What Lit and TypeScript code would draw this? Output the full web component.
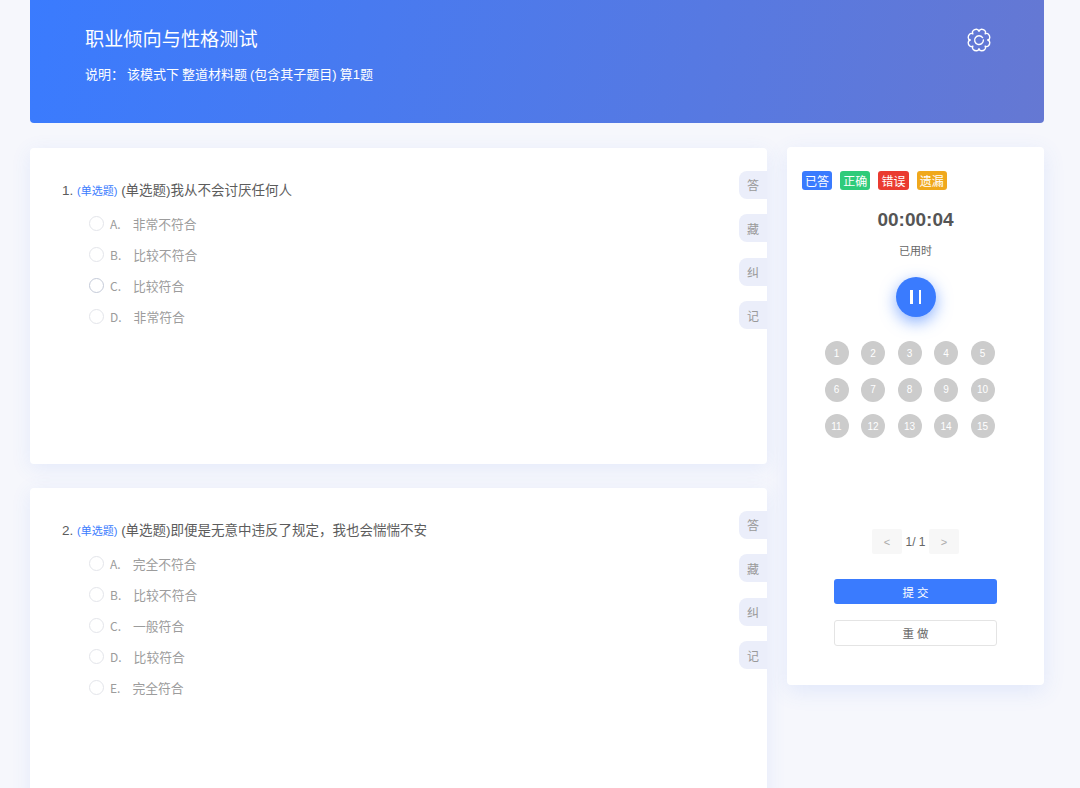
import { LitElement, html, css } from "lit";
import { customElement } from "lit/decorators.js";

const questions = [
  {
    no: 1,
    title: "(单选题)我从不会讨厌任何人",
    options: ["非常不符合", "比较不符合", "比较符合", "非常符合"],
  },
  {
    no: 2,
    title: "(单选题)即便是无意中违反了规定，我也会惴惴不安",
    options: ["完全不符合", "比较不符合", "一般符合", "比较符合", "完全符合"],
  },
];

const letters = ["A", "B", "C", "D", "E"];
const tools = ["答", "藏", "纠", "记"];
const legend = [
  { label: "已答", cls: "blue" },
  { label: "正确", cls: "green" },
  { label: "错误", cls: "red" },
  { label: "遗漏", cls: "amber" },
];

// eight rounded teeth, centred on 12,12
function gearPath() {
  const pt = (r: number, deg: number) => {
    const a = (deg * Math.PI) / 180;
    return `${(12 + r * Math.cos(a)).toFixed(2)} ${(12 + r * Math.sin(a)).toFixed(2)}`;
  };
  let d = `M${pt(8.7, 0)}`;
  for (let k = 0; k < 8; k++) {
    const a = 22.5 + k * 45;
    d += ` Q${pt(10.9, a - 19)} ${pt(11.1, a - 9)}`;
    d += ` Q${pt(11.7, a)} ${pt(11.1, a + 9)}`;
    d += ` Q${pt(10.9, a + 19)} ${pt(8.7, a + 22.5)}`;
  }
  return d + "Z";
}

@customElement("app-root")
export class AppRoot extends LitElement {
  static styles = css`
    :host {
      display: block;
      height: 788px;
      overflow: hidden;
      box-sizing: border-box;
      padding: 0 36px 0 30px;
      background: #f6f7fc;
      color: #555;
      font-family: "Liberation Sans", "Noto Sans CJK SC", sans-serif;
    }

    .banner {
      height: 123px;
      box-sizing: border-box;
      padding: 28px 53px 0 55px;
      display: flex;
      justify-content: space-between;
      align-items: flex-start;
      border-radius: 0 0 4px 4px;
      background: linear-gradient(100deg, #3a7bfe 0%, #6578d3 100%);
      color: #fff;
    }

    h1 {
      margin: 0;
      font-size: 19.2px;
      line-height: 24px;
      font-weight: 400;
    }

    .note {
      margin-top: 13px;
      font-size: 13px;
      line-height: 20px;
      word-spacing: -0.6px;
    }

    .note span {
      margin-right: 3px;
    }

    .gear {
      width: 24px;
      height: 24px;
      stroke: #fff;
      fill: none;
      stroke-width: 1.4;
    }

    .main {
      display: flex;
      align-items: flex-start;
      gap: 20px;
      margin-top: 24px;
    }

    .questions {
      width: 737px;
      flex: none;
      margin-top: 1px;
      display: flex;
      flex-direction: column;
      gap: 24px;
    }

    .card {
      position: relative;
      height: 316px;
      box-sizing: border-box;
      padding: 33px 32px 0;
      background: #fff;
      border-radius: 4px;
      box-shadow: 0 4px 20px rgba(70, 120, 240, 0.1);
    }

    .q-title {
      font-size: 13.5px;
      line-height: 20px;
      color: #5c5c5c;
    }

    .q-title em {
      font-style: normal;
      font-size: 11px;
      color: #3a7bfe;
    }

    .options {
      list-style: none;
      margin: 7px 0 0;
      padding: 0 0 0 27px;
    }

    .options li {
      height: 31px;
      display: flex;
      align-items: center;
      color: #9c9c9c;
      font-size: 12.8px;
    }

    .radio {
      width: 13px;
      height: 13px;
      border: 1px solid #e3e5ea;
      border-radius: 50%;
      margin-right: 6px;
    }

    .radio.hover {
      border-color: #c4cad8;
    }

    .letter {
      font-family: "Noto Sans CJK SC", sans-serif;
      font-size: 12px;
      margin-right: 12px;
    }

    .tools {
      position: absolute;
      top: 22.5px;
      right: 0;
      display: flex;
      flex-direction: column;
      gap: 15.5px;
    }

    .tools span {
      width: 28px;
      height: 28px;
      display: flex;
      align-items: center;
      justify-content: center;
      background: #ebeefa;
      border-radius: 8px 0 0 8px;
      color: #999;
      font-size: 12px;
    }

    .side {
      width: 257px;
      height: 538px;
      flex: none;
      box-sizing: border-box;
      padding: 24px 15px 0;
      background: #fff;
      border-radius: 4px;
      box-shadow: 0 6px 22px rgba(70, 120, 240, 0.12);
      display: flex;
      flex-direction: column;
      align-items: center;
    }

    .legend {
      align-self: stretch;
      display: flex;
      gap: 8px;
    }

    .legend span {
      width: 30.2px;
      height: 19px;
      display: flex;
      align-items: center;
      justify-content: center;
      border-radius: 3px;
      color: #fff;
      font-size: 12px;
    }

    .blue { background: #3a7bfe; }
    .green { background: #2fcb7a; }
    .red { background: #ea3b30; }
    .amber { background: #f0a81c; }

    .clock {
      margin-top: 18px;
      font-size: 19px;
      line-height: 24px;
      font-weight: 700;
      color: #555;
    }

    .used {
      margin-top: 12px;
      font-size: 11px;
      line-height: 14px;
      color: #666;
    }

    .pause {
      width: 40px;
      height: 40px;
      margin-top: 19px;
      display: flex;
      align-items: center;
      justify-content: center;
      gap: 6px;
      border-radius: 50%;
      background: #3a7bfe;
      box-shadow: 0 5px 16px rgba(58, 123, 254, 0.6);
    }

    .pause i {
      width: 2.5px;
      height: 14px;
      background: #fff;
    }

    .grid {
      margin: 24px 12px 0 0;
      display: grid;
      grid-template-columns: repeat(5, 24px);
      column-gap: 12.5px;
      row-gap: 12.5px;
    }

    .grid span {
      height: 24px;
      display: flex;
      align-items: center;
      justify-content: center;
      border-radius: 50%;
      background: #ccc;
      color: #fff;
      font-size: 10px;
    }

    .pager {
      margin-top: 91px;
      display: flex;
      align-items: center;
      font-size: 12px;
      color: #666;
    }

    .pager b {
      width: 30px;
      height: 25px;
      display: flex;
      align-items: center;
      justify-content: center;
      background: #f7f7f7;
      border-radius: 2px;
      color: #aaa;
      font-weight: 400;
      font-size: 11px;
    }

    .pager span {
      width: 27px;
      text-align: center;
    }

    .btn {
      width: 163px;
      box-sizing: border-box;
      display: flex;
      align-items: center;
      justify-content: center;
      border-radius: 3px;
      font-size: 11.5px;
      letter-spacing: 3px;
      padding-left: 3px;
    }

    .submit {
      height: 25px;
      margin-top: 25px;
      background: #3a7bfe;
      color: #fff;
    }

    .redo {
      height: 26px;
      margin-top: 16px;
      background: #fff;
      border: 1px solid #e4e4e4;
      color: #666;
    }
  `;

  private renderQuestion(q: (typeof questions)[number]) {
    return html`
      <section class="card">
        <div class="q-title">${q.no}. <em>(单选题)</em> ${q.title}</div>
        <ul class="options">
          ${q.options.map(
            (text, i) => html`
              <li>
                <span class="radio ${q.no === 1 && i === 2 ? "hover" : ""}"></span>
                <span class="letter">${letters[i]}.</span>${text}
              </li>
            `
          )}
        </ul>
        <div class="tools">${tools.map((t) => html`<span>${t}</span>`)}</div>
      </section>
    `;
  }

  render() {
    return html`
      <header class="banner">
        <div>
          <h1>职业倾向与性格测试</h1>
          <div class="note"><span>说明：</span>该模式下 整道材料题 (包含其子题目) 算1题</div>
        </div>
        <svg class="gear" viewBox="0 0 24 24" stroke-linecap="round" stroke-linejoin="round">
          <path d=${gearPath()}></path>
          <path d="M15.6 9.6A4.4 4.4 0 1 0 16.4 12"></path>
        </svg>
      </header>
      <div class="main">
        <div class="questions">${questions.map((q) => this.renderQuestion(q))}</div>
        <aside class="side">
          <div class="legend">
            ${legend.map((l) => html`<span class=${l.cls}>${l.label}</span>`)}
          </div>
          <div class="clock">00:00:04</div>
          <div class="used">已用时</div>
          <div class="pause"><i></i><i></i></div>
          <div class="grid">
            ${Array.from({ length: 15 }, (_, i) => html`<span>${i + 1}</span>`)}
          </div>
          <div class="pager"><b>&lt;</b><span>1/ 1</span><b>&gt;</b></div>
          <div class="btn submit">提交</div>
          <div class="btn redo">重做</div>
        </aside>
      </div>
    `;
  }
}
